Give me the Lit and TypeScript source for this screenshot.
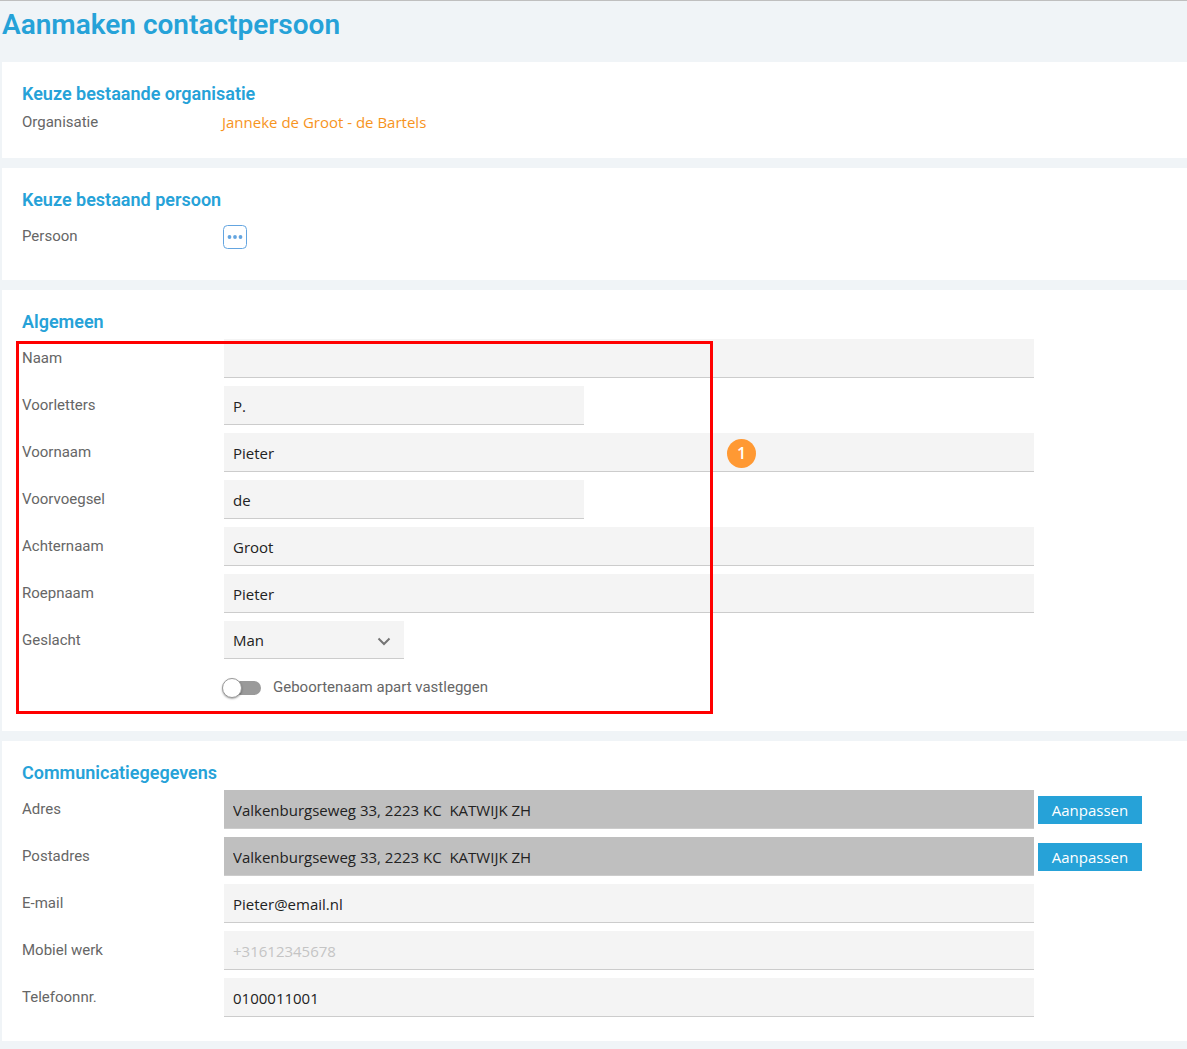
import { LitElement, html, css, nothing } from "lit";
import { customElement, state } from "lit/decorators.js";

interface Field {
  id: string;
  label: string;
  value?: string;
  placeholder?: string;
  short?: boolean;
  locked?: boolean;
  type?: string;
}

const generalFields: Field[] = [
  { id: "naam", label: "Naam" },
  { id: "voorletters", label: "Voorletters", value: "P.", short: true },
  { id: "voornaam", label: "Voornaam", value: "Pieter" },
  { id: "voorvoegsel", label: "Voorvoegsel", value: "de", short: true },
  { id: "achternaam", label: "Achternaam", value: "Groot" },
  { id: "roepnaam", label: "Roepnaam", value: "Pieter" },
];

const contactFields: Field[] = [
  { id: "adres", label: "Adres", value: "Valkenburgseweg 33, 2223 KC  KATWIJK ZH", locked: true },
  { id: "postadres", label: "Postadres", value: "Valkenburgseweg 33, 2223 KC  KATWIJK ZH", locked: true },
  { id: "email", label: "E-mail", value: "Pieter@email.nl", type: "email" },
  { id: "mobiel", label: "Mobiel werk", placeholder: "+31612345678", type: "tel" },
  { id: "telefoon", label: "Telefoonnr.", value: "0100011001", type: "tel" },
];

@customElement("app-root")
export class AppRoot extends LitElement {
  static styles = css`
    :host {
      display: block;
      box-sizing: border-box;
      min-height: 100vh;
      padding: 0 0 8px 2px;
      border-top: 1px solid #bfbfbf;
      background: #f0f4f7;
      color: #666;
      font: 15px/24px Roboto, "Liberation Sans", sans-serif;
    }
    *,
    *::before {
      box-sizing: border-box;
    }
    .title {
      margin: 0;
      padding: 4px 0 17px;
      color: #26a2d8;
      font-size: 28px;
      font-weight: 600;
      line-height: 40px;
    }
    .cards {
      display: flex;
      flex-direction: column;
      gap: 10px;
    }
    .card {
      position: relative;
      padding: 20px 20px 24px;
      background: #fff;
    }
    .heading {
      margin: 0 0 5px;
      color: #26a2d8;
      font-size: 18px;
      font-weight: 600;
      line-height: 24px;
    }
    .rows {
      display: flex;
      flex-direction: column;
      gap: 8px;
    }
    .row {
      display: grid;
      grid-template-columns: 202px minmax(0, 810px) auto;
      min-height: 39px;
    }
    .row.compact {
      min-height: 23px;
    }
    .label {
      line-height: 38px;
    }
    .compact .label,
    .compact .link {
      line-height: 23px;
    }
    .link {
      justify-self: start;
      margin-left: -2px;
      color: #f7941d;
      font-family: "Open Sans", "Noto Sans", sans-serif;
      text-decoration: none;
    }
    .picker {
      display: flex;
      align-self: center;
      width: 24px;
      height: 24px;
      margin-left: -1px;
      padding: 0;
      border: 0;
      background: none;
      cursor: pointer;
    }
    .field {
      width: 100%;
      height: 39px;
      padding: 2px 9px 0;
      border: 0;
      border-bottom: 1px solid #ccc;
      border-radius: 0;
      outline: 0;
      background: #f4f4f4;
      color: #222;
      font: 15px/24px "Open Sans", "Noto Sans", sans-serif;
    }
    .field::placeholder {
      color: #c4c4c4;
      opacity: 1;
    }
    .field.short {
      max-width: 360px;
    }
    .field.locked {
      background: #bfbfbf;
    }
    .select {
      position: relative;
      max-width: 180px;
      height: 38px;
    }
    .select .field {
      height: 38px;
      padding-top: 0;
      appearance: none;
    }
    .chevron {
      position: absolute;
      top: 14px;
      right: 13px;
      pointer-events: none;
    }
    .adjust {
      align-self: center;
      width: 104px;
      height: 28px;
      margin-left: 4px;
      padding: 0;
      border: 0;
      background: #26a2d8;
      color: #fff;
      font: 15px/28px "Open Sans", "Noto Sans", sans-serif;
      cursor: pointer;
    }
    .toggle {
      display: flex;
      grid-column: 2;
      gap: 12px;
      margin-left: -2px;
      line-height: 38px;
      cursor: pointer;
    }
    .switch {
      appearance: none;
      display: flex;
      align-items: center;
      width: 38px;
      height: 14px;
      margin: 13px 0 0 1px;
      border-radius: 7px;
      background: #9a9a9a;
      cursor: pointer;
    }
    .switch::before {
      content: "";
      width: 20px;
      height: 20px;
      flex: none;
      margin-left: -1px;
      border: 1px solid #999;
      border-radius: 50%;
      background: #fff;
      box-shadow: 0 1px 2px rgba(0, 0, 0, 0.35);
    }
    .switch:checked {
      background: #26a2d8;
    }
    .switch:checked::before {
      margin-left: 19px;
    }
    .highlight {
      position: absolute;
      top: 51px;
      left: 14px;
      width: 697px;
      bottom: 17px;
      border: 3px solid #f00;
      pointer-events: none;
    }
    .badge {
      position: absolute;
      top: 149px;
      left: 725px;
      width: 29px;
      height: 29px;
      border-radius: 50%;
      background: #ff9933;
      color: #fff;
      font-family: "Open Sans", "Noto Sans", sans-serif;
      font-size: 16px;
      font-weight: 600;
      line-height: 29px;
      text-align: center;
    }
  `;

  @state() private separateBirthName = false;

  private renderField(field: Field) {
    const classes = ["field", field.short ? "short" : "", field.locked ? "locked" : ""].join(" ");
    return html`
      <div class="row">
        <label class="label" for=${field.id}>${field.label}</label>
        <input
          class=${classes}
          id=${field.id}
          type=${field.type ?? "text"}
          .value=${field.value ?? ""}
          placeholder=${field.placeholder ?? nothing}
          ?readonly=${field.locked}
        />
        ${field.locked ? html`<button class="adjust" type="button">Aanpassen</button>` : nothing}
      </div>
    `;
  }

  render() {
    return html`
      <h1 class="title">Aanmaken contactpersoon</h1>
      <main class="cards">
        <section class="card">
          <h2 class="heading">Keuze bestaande organisatie</h2>
          <div class="row compact">
            <span class="label">Organisatie</span>
            <a class="link" href="#organisatie">Janneke de Groot - de Bartels</a>
          </div>
        </section>

        <section class="card">
          <h2 class="heading">Keuze bestaand persoon</h2>
          <div class="row">
            <label class="label" for="persoon">Persoon</label>
            <button class="picker" id="persoon" type="button">
              <svg width="24" height="24" viewBox="0 0 24 24" fill="#64a5e0" aria-hidden="true">
                <rect x="0.5" y="0.5" width="23" height="23" rx="4" fill="#fff" stroke="#64a5e0" />
                <circle cx="6.5" cy="12" r="1.900" />
                <circle cx="12" cy="12" r="1.900" />
                <circle cx="17.5" cy="12" r="1.900" />
              </svg>
            </button>
          </div>
        </section>

        <section class="card">
          <h2 class="heading">Algemeen</h2>
          <div class="rows">
            ${generalFields.map((field) => this.renderField(field))}
            <div class="row">
              <label class="label" for="geslacht">Geslacht</label>
              <div class="select">
                <select class="field" id="geslacht">
                  <option selected>Man</option>
                </select>
                <svg class="chevron" width="14" height="12" viewBox="0 0 14 12" fill="none" stroke="#757575" stroke-width="2" aria-hidden="true">
                  <path d="M1.5 3.5 7 9l5.500-5.500" />
                </svg>
              </div>
            </div>
            <div class="row">
              <label class="toggle">
                <input
                  class="switch"
                  type="checkbox"
                  role="switch"
                  .checked=${this.separateBirthName}
                  @change=${(e: Event) => (this.separateBirthName = (e.target as HTMLInputElement).checked)}
                />
                Geboortenaam apart vastleggen
              </label>
            </div>
          </div>
          <div class="highlight"></div>
          <span class="badge">1</span>
        </section>

        <section class="card">
          <h2 class="heading">Communicatiegegevens</h2>
          <div class="rows">${contactFields.map((field) => this.renderField(field))}</div>
        </section>
      </main>
    `;
  }
}
